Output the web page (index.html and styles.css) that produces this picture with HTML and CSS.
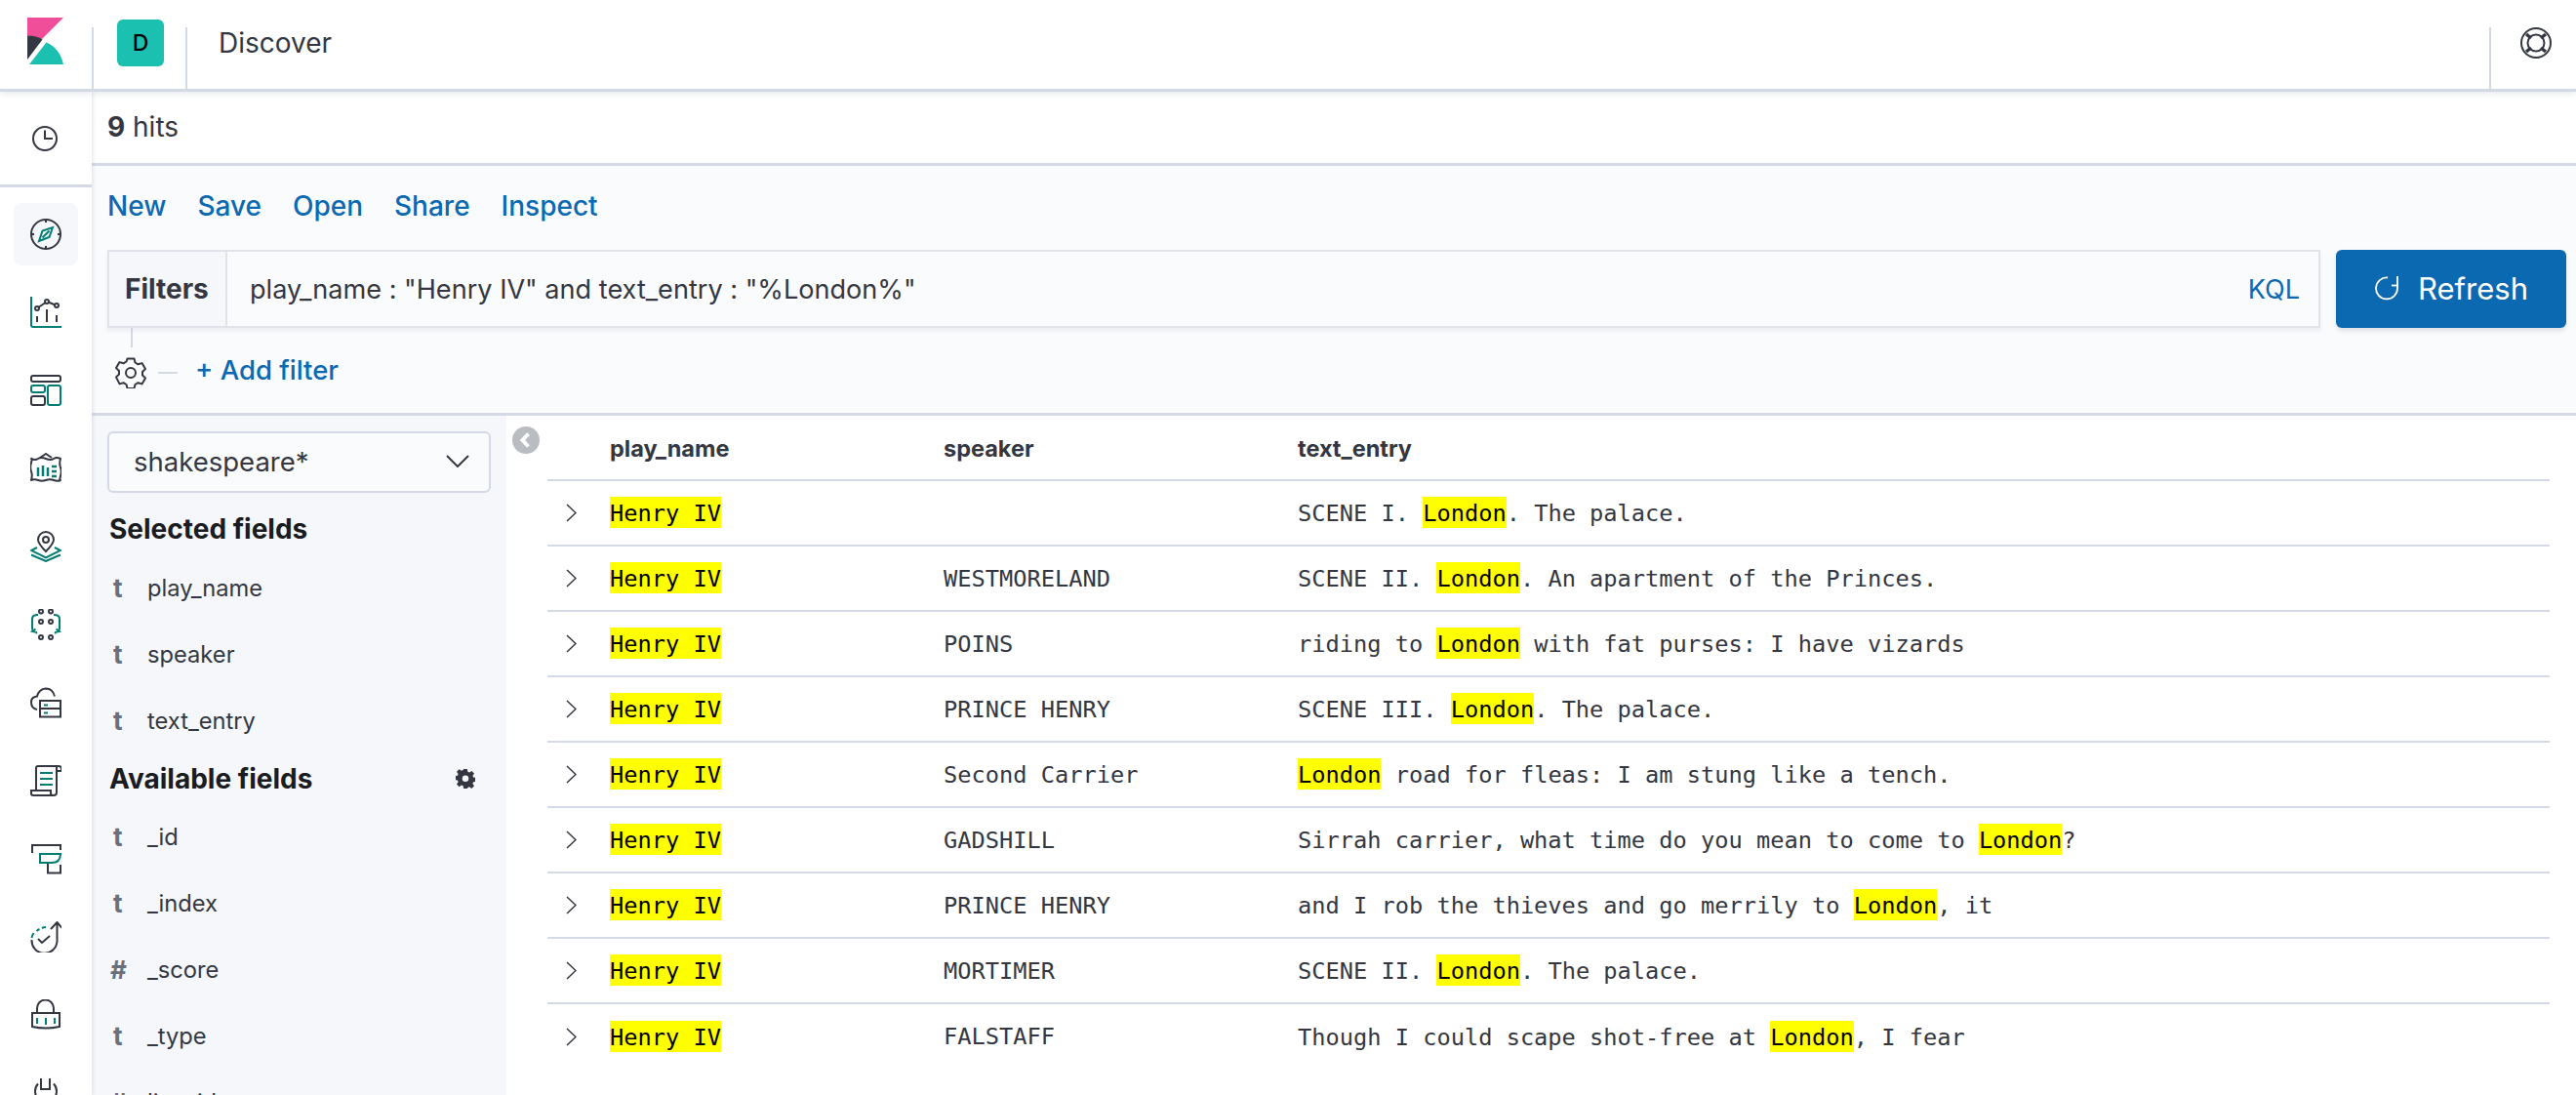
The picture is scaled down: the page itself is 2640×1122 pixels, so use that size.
FILE: index.html
```html
<!DOCTYPE html>
<html lang="en">
<head>
    <meta charset="UTF-8">
    <title>Discover - Kibana</title>
    <link rel="stylesheet" href="styles.css">
</head>
<body>
    <header class="topbar">
        <div class="logo-cell">
            <svg class="logo" viewBox="0 0 37 48" width="37" height="48">
                <path fill="#f04e98" d="M0 0H37L12 25Q7 19 0 18.500Z"/>
                <path fill="#343741" d="M0 18.500Q10 18.500 15.500 22.500L0 43Z"/>
                <path fill="#1bc0b0" d="M2 48L19.500 25.500Q33 31 37 48Z"/>
            </svg>
        </div>
        <div class="space-cell"><span class="avatar">D</span></div>
        <div class="crumb">Discover</div>
        <div class="help-cell">
            <svg viewBox="0 0 32 32" width="32" height="32" fill="none" stroke="#343741" stroke-width="2">
                <circle cx="16" cy="16" r="15"/>
                <circle cx="16" cy="16" r="8.500"/>
                <path d="M6 7l5 4M26 7l-5 4M6 25l5-4M26 25l-5-4" stroke-width="3.500"/>
            </svg>
        </div>
    </header>

    <div class="page">
        <nav class="sidenav">
            <div class="recent">
                <svg class="icon" viewBox="0 0 32 32" fill="none" stroke="#343741" stroke-width="2"><circle cx="15" cy="15" r="12"/><path d="M15 6.500V15H23"/></svg>
            </div>
            <ul class="nav-list">
                <li class="nav-item active">
                    <svg class="icon" viewBox="0 0 32 32" fill="none" stroke="#343741" stroke-width="2"><circle cx="16" cy="16" r="15"/><path d="M16 1v3M16 28v3M1 16h3M28 16h3"/><path stroke="#017d73" d="M23 9l-3.500 10L9 23l3.500-10.500z"/><path stroke="#017d73" d="M12.500 19.500l7-7"/></svg>
                </li>
                <li class="nav-item">
                    <svg class="icon" viewBox="0 0 32 32" fill="none" stroke="#343741" stroke-width="2"><path stroke="#017d73" d="M1 0V29a2 2 0 0 0 2 2H32"/><path d="M7 26v-6M17 26V13M27 26v-7"/><circle cx="7" cy="12" r="2"/><circle cx="17" cy="5" r="2"/><circle cx="27" cy="9" r="2"/><path d="M8.700 10.800l6.600-4.600M19 5.800l6 2.400"/></svg>
                </li>
                <li class="nav-item">
                    <svg class="icon" viewBox="0 0 32 32" fill="none" stroke="#343741" stroke-width="2"><rect x="1" y="1" width="30" height="6" rx="2"/><rect stroke="#017d73" x="1" y="11" width="14" height="7" rx="2"/><rect x="1" y="22" width="14" height="9" rx="2"/><rect stroke="#017d73" x="18" y="11" width="13" height="20" rx="2"/></svg>
                </li>
                <li class="nav-item">
                    <svg class="icon" viewBox="0 0 32 32" fill="none" stroke="#343741" stroke-width="2"><path d="M10 5L16 1l6 4"/><path d="M1 6q4 2 7 0t8 0 8 0 7 0q-1.500 5 0 9t0 9 0 4q-3 1.500-7 0t-8 0-8 0-7 0q1.500-5 0-9t0-9 0-4z" stroke-linejoin="round"/><path stroke="#017d73" d="M8 15v9M13 13v11M18 15v9M22 14h5M22 19h5M22 24h5" stroke-width="2.500"/></svg>
                </li>
                <li class="nav-item">
                    <svg class="icon" viewBox="0 0 32 32" fill="none" stroke="#343741" stroke-width="2"><path d="M16 21q-8-8-8-12a8 8 0 0 1 16 0q0 4-8 12z"/><circle cx="16" cy="9" r="3"/><path stroke="#017d73" d="M7 17l-6 3 15 7.500L31 20l-6-3M1 24.500L16 31l15-6.500"/></svg>
                </li>
                <li class="nav-item">
                    <svg class="icon" viewBox="0 0 32 32" fill="none" stroke="#343741" stroke-width="2"><circle cx="11" cy="2.500" r="2"/><circle cx="21" cy="2.500" r="2"/><circle cx="11" cy="13" r="2"/><circle cx="21" cy="13" r="2"/><circle cx="11" cy="29" r="2"/><circle cx="21" cy="29" r="2"/><path stroke="#017d73" d="M8 6Q2 6 2 10V20q0 2 2 3l3 2M5.500 20.500L2 23l5 1M24 6q6 0 6 4V20q0 2-2 3l-3 2M26.500 20.500L30 23l-5 1"/></svg>
                </li>
                <li class="nav-item">
                    <svg class="icon" viewBox="0 0 32 32" fill="none" stroke="#343741" stroke-width="2"><path d="M7 23Q1 22 1 15.500 1 10 7 9.500 9 2 16 1.500q7 0 9 8"/><rect x="10" y="14" width="21" height="16.500"/><path d="M10 22h21"/><path stroke="#017d73" d="M14 18.500h4M14 26.500h4"/></svg>
                </li>
                <li class="nav-item">
                    <svg class="icon" viewBox="0 0 32 32" fill="none" stroke="#343741" stroke-width="2"><path d="M6 26V3q0-2 2-2H29q3 0 3 3v2h-5V2M27 2V28q0 3-3 3H3q-2 0-2-2v-3H21v3q0 2 3 2"/><path stroke="#017d73" d="M10 8h13M10 14h13M10 20h13"/></svg>
                </li>
                <li class="nav-item">
                    <svg class="icon" viewBox="0 0 32 32" fill="none" stroke="#343741" stroke-width="2"><path d="M2 10V2H31V7M18 20v-.5M19 21h-1v9.500H31V22"/><path stroke="#017d73" d="M10 11H31q0 9-9 9H10z"/></svg>
                </li>
                <li class="nav-item">
                    <svg class="icon" viewBox="0 0 32 32" fill="none" stroke="#343741" stroke-width="2"><path stroke="#017d73" d="M12 7a12 12 0 0 1 4-1M6.500 10a12 12 0 0 1 3-2M1.500 17a12 12 0 0 1 2-5"/><path d="M1.500 19a13 13 0 0 0 26 1.500V2M21 8l6.500-7 6 7M8 18l4 4 8-7"/></svg>
                </li>
                <li class="nav-item">
                    <svg class="icon" viewBox="0 0 32 32" fill="none" stroke="#343741" stroke-width="2"><path d="M7 14V9a8.500 8.500 0 0 1 17 0v5"/><path d="M2 14H30V28q-14 3-28 0z"/><path stroke="#017d73" d="M7 19v6M16 19v7M25 19v6"/></svg>
                </li>
                <li class="nav-item">
                    <svg class="icon" viewBox="0 0 32 32" fill="none" stroke="#343741" stroke-width="2"><path d="M8 6.500a11 11 0 1 0 16 0M11 1v11h9V1"/></svg>
                </li>
            </ul>
        </nav>

        <div class="content">
            <div class="hits"><b>9</b> hits</div>

            <section class="toolbar">
                <div class="menu">
                    <a>New</a>
                    <a>Save</a>
                    <a>Open</a>
                    <a>Share</a>
                    <a>Inspect</a>
                </div>
                <div class="query-row">
                    <div class="query">
                        <span class="query-label">Filters</span>
                        <span class="query-text">play_name : "Henry IV" and text_entry : "%London%"</span>
                        <span class="kql">KQL</span>
                    </div>
                    <button class="refresh">
                        <svg viewBox="0 0 24 26" width="24" height="26" fill="none" stroke="#fff" stroke-width="1.800"><path d="M13 2.500A11 11 0 1 0 23 13.500V1"/><path d="M23 10.500h-6"/></svg>
                        Refresh
                    </button>
                </div>
                <div class="filter-stub"></div>
                <div class="filter-row">
                    <svg viewBox="0 0 32 32" width="32" height="32" fill="none" stroke="#343741" stroke-width="2" stroke-linejoin="round"><path d="M12.500 1.500h7l1 4 3 1.800 4-1.200 3.500 6-3 2.900v3.500l3 2.900-3.500 6-4-1.200-3 1.800-1 4h-7l-1-4-3-1.800-4 1.200L1 20.400l3-2.900V14l-3-2.900 3.500-6 4 1.200 3-1.800z"/><circle cx="16" cy="16" r="5"/></svg>
                    <span class="filter-dash"></span>
                    <a class="add-filter">+ Add filter</a>
                </div>
            </section>

            <div class="discover">
                <aside class="fields">
                    <div class="index-select">
                        shakespeare*
                        <svg viewBox="0 0 24 13" width="24" height="13" fill="none" stroke="#343741" stroke-width="2"><path d="M1 1l11 11L23 1"/></svg>
                    </div>
                    <h3 class="fields-title">Selected fields</h3>
                    <ul class="field-list">
                        <li><i>t</i>play_name</li>
                        <li><i>t</i>speaker</li>
                        <li><i>t</i>text_entry</li>
                    </ul>
                    <h3 class="fields-title available">Available fields
                        <svg viewBox="0 0 16 16" width="20" height="20" fill="#343741"><path fill-rule="evenodd" d="M6.500 0h3l.4 2.200 1.300.6L13.100 1.500l2.100 2.100-1.300 1.900.6 1.300 2.200.4v3l-2.200.4-.6 1.300 1.300 1.900-2.100 2.100-1.900-1.300-1.300.6L9.500 16h-3l-.4-2.200-1.300-.6-1.900 1.300L.8 12.400l1.300-1.900-.6-1.300L-.700 8.800v-3l2.200-.4.600-1.300L.8 2.200 2.900.1l1.900 1.300 1.300-.6zM8 5.200a2.600 2.600 0 1 0 0 5.200 2.600 2.600 0 0 0 0-5.200z"/></svg>
                    </h3>
                    <ul class="field-list field-list-available">
                        <li><i>t</i>_id</li>
                        <li><i>t</i>_index</li>
                        <li><i class="num">#</i>_score</li>
                        <li><i>t</i>_type</li>
                        <li><i class="num">#</i>line_id</li>
                    </ul>
                </aside>

                <main class="results">
                    <span class="collapse">
                        <svg viewBox="0 0 28 28" width="28" height="28"><circle cx="14" cy="14" r="14" fill="#b9bcc0"/><path d="M16.500 7.500L10.500 14l6 6.500" fill="none" stroke="#fff" stroke-width="4"/></svg>
                    </span>
                    <table class="doc-table">
                        <thead>
                            <tr><th></th><th>play_name</th><th>speaker</th><th>text_entry</th></tr>
                        </thead>
                        <tbody id="rows"></tbody>
                    </table>
                </main>
            </div>
        </div>
    </div>

    <script>
        const rows = [
            ['', 'SCENE I. <mark>London</mark>. The palace.'],
            ['WESTMORELAND', 'SCENE II. <mark>London</mark>. An apartment of the Princes.'],
            ['POINS', 'riding to <mark>London</mark> with fat purses: I have vizards'],
            ['PRINCE HENRY', 'SCENE III. <mark>London</mark>. The palace.'],
            ['Second Carrier', '<mark>London</mark> road for fleas: I am stung like a tench.'],
            ['GADSHILL', 'Sirrah carrier, what time do you mean to come to <mark>London</mark>?'],
            ['PRINCE HENRY', 'and I rob the thieves and go merrily to <mark>London</mark>, it'],
            ['MORTIMER', 'SCENE II. <mark>London</mark>. The palace.'],
            ['FALSTAFF', 'Though I could scape shot-free at <mark>London</mark>, I fear']
        ];
        const chevron = '<svg viewBox="0 0 11 19" width="11" height="19" fill="none" stroke="#343741" stroke-width="1.500"><path d="M1 1l9 8.500L1 18"/></svg>';
        document.getElementById('rows').innerHTML = rows.map(r =>
            `<tr><td>${chevron}</td><td><mark>Henry IV</mark></td><td>${r[0]}</td><td>${r[1]}</td></tr>`
        ).join('');
    </script>
</body>
</html>
```

FILE: styles.css
```css
* {
    box-sizing: border-box;
}
html, body {
    height: 100%;
}
body {
    margin: 0;
    overflow: hidden;
    font-family: Inter, "Liberation Sans", sans-serif;
    color: #343741;
    background-color: #fff;
}
a {
    color: #0b69b2;
}
ul {
    list-style: none;
    margin: 0;
    padding: 0;
}

/* top bar */
.topbar {
    position: relative;
    z-index: 2;
    display: flex;
    height: 94px;
    border-bottom: 3px solid #d3dae6;
    box-shadow: 0 3px 6px rgba(152, 162, 179, 0.2);
    background-color: #fff;
}
.logo-cell {
    width: 94px;
    padding: 18px 0 0 28px;
}
.logo {
    display: block;
}
.space-cell {
    width: 98px;
    margin-top: 28px;
    border-left: 2px solid #d3dae6;
    border-right: 2px solid #d3dae6;
    padding: 0 0 0 24px;
}
.avatar {
    display: flex;
    align-items: center;
    justify-content: center;
    width: 48px;
    height: 48px;
    margin-top: -8px;
    border-radius: 6px;
    background-color: #1bc0b0;
    color: #000;
    font-size: 23px;
    font-weight: 500;
}
.crumb {
    flex: 1;
    padding: 27px 0 0 32px;
    font-size: 28px;
    line-height: 34px;
}
.help-cell {
    width: 89px;
    margin-top: 28px;
    border-left: 2px solid #d3dae6;
    padding-left: 30px;
}
.help-cell svg {
    display: block;
}

/* left nav */
.page {
    display: flex;
    height: 1028px;
}
.sidenav {
    position: relative;
    z-index: 1;
    flex: 0 0 94px;
    background-color: #fff;
    box-shadow: 2px 0 3px rgba(152, 162, 179, 0.2);
}
.recent {
    display: flex;
    justify-content: center;
    height: 98px;
    padding-top: 33px;
    border-bottom: 3px solid #d3dae6;
}
.icon {
    width: 32px;
    height: 32px;
}
.nav-list {
    display: flex;
    flex-direction: column;
    gap: 16px;
    padding: 16px 14px 0;
}
.nav-item {
    display: flex;
    flex: 0 0 64px;
    align-items: center;
    justify-content: center;
    border-radius: 8px;
}
.nav-item.active {
    background-color: #f5f7fa;
}

/* main */
.content {
    flex: 1;
    min-width: 0;
    display: flex;
    flex-direction: column;
}
.hits {
    height: 76px;
    padding: 20px 0 0 16px;
    border-bottom: 3px solid #d3dae6;
    font-size: 28px;
    line-height: 33px;
}
.hits b {
    font-weight: 700;
}
.toolbar {
    height: 256px;
    padding: 0 10px 0 16px;
    border-bottom: 3px solid #d3dae6;
    background-color: #fafbfd;
}
.menu {
    display: flex;
    gap: 32px;
    height: 86px;
    padding-top: 24px;
    font-size: 28px;
    line-height: 34px;
    font-weight: 500;
}
.query-row {
    display: flex;
    gap: 16px;
    height: 80px;
}
.query {
    flex: 1;
    display: flex;
    align-items: center;
    border: 2px solid #e0e3e9;
    box-shadow: 0 3px 4px rgba(152, 162, 179, 0.15);
    font-size: 27.100px;
}
.query-label {
    flex: 0 0 121px;
    align-self: stretch;
    border-right: 2px solid #e0e3e9;
    background-color: #f5f7fa;
    padding-left: 16px;
    font-size: 28px;
    line-height: 76px;
    font-weight: 700;
}
.query-text {
    flex: 1;
    padding-left: 23px;
}
.kql {
    padding-right: 19px;
    color: #0b69b2;
}
.refresh {
    display: flex;
    flex: 0 0 236px;
    align-items: center;
    gap: 20px;
    padding: 0 0 2px 40px;
    border: none;
    border-radius: 6px;
    background-color: #0b69b2;
    color: #fff;
    box-shadow: 0 3px 4px rgba(152, 162, 179, 0.3);
    font-family: inherit;
    font-size: 31px;
}
.filter-stub {
    width: 2px;
    height: 20px;
    margin-left: 24px;
    background-color: #d3dae6;
}
.filter-row {
    display: flex;
    align-items: center;
    height: 52px;
    padding: 0 0 0 8px;
}
.filter-dash {
    width: 20px;
    height: 2px;
    margin: 0 18px 0 12px;
    background-color: #d3dae6;
}
.add-filter {
    position: relative;
    top: -3px;
    font-size: 27.500px;
    font-weight: 500;
}

/* field list */
.discover {
    flex: 1;
    display: flex;
    min-height: 0;
    overflow: hidden;
}
.fields {
    flex: 0 0 425px;
    padding: 16px 16px 0;
    background-color: #f5f7fa;
}
.index-select {
    display: flex;
    align-items: center;
    justify-content: space-between;
    width: 393px;
    height: 63px;
    padding: 0 20px 2px 25px;
    border: 2px solid #d3dae6;
    border-radius: 6px;
    background-color: #fafbfd;
    font-size: 27.500px;
}
.fields-title {
    display: flex;
    justify-content: space-between;
    align-items: center;
    margin: 20px 0 0;
    width: 393px;
    padding: 0 16px 0 2px;
    font-size: 28px;
    line-height: 34px;
    font-weight: 700;
    color: #1a1c21;
}
.fields-title.available {
    margin-top: 9px;
}
.field-list {
    margin-top: 9px;
}
.field-list-available {
    margin-top: 8px;
}
.field-list li {
    display: flex;
    align-items: center;
    height: 68px;
    font-size: 23.700px;
}
.field-list i {
    flex: 0 0 41px;
    padding-left: 6px;
    font-size: 26px;
    font-style: normal;
    font-weight: 700;
    color: #69707d;
}
.field-list i.num {
    padding-left: 3px;
}

/* doc table */
.results {
    position: relative;
    flex: 1;
    padding: 0 27px 0 42px;
}
.collapse {
    position: absolute;
    left: 6px;
    top: 11px;
}
.doc-table {
    width: 100%;
    border-collapse: collapse;
    table-layout: fixed;
    font-family: "DejaVu Sans Mono", monospace;
    font-size: 23.670px;
    line-height: 32px;
}
.doc-table th {
    height: 66px;
    padding: 2px 0 0;
    text-align: left;
    font-family: Inter, "Liberation Sans", sans-serif;
    font-size: 23.500px;
    font-weight: 700;
    border-bottom: 2px solid #d3dae6;
}
.doc-table th:nth-child(1) { width: 64px; }
.doc-table th:nth-child(2) { width: 342px; }
.doc-table th:nth-child(3) { width: 363px; }
.doc-table td {
    height: 67px;
    padding: 0;
    border-bottom: 2px solid #d3dae6;
}
.doc-table tr:last-child td {
    border-bottom: none;
}
.doc-table td svg {
    display: block;
    margin-left: 19px;
}
mark {
    display: inline-block;
    padding-top: 2px;
    line-height: 30px;
    background-color: #ffff00;
    color: #000;
}
```
